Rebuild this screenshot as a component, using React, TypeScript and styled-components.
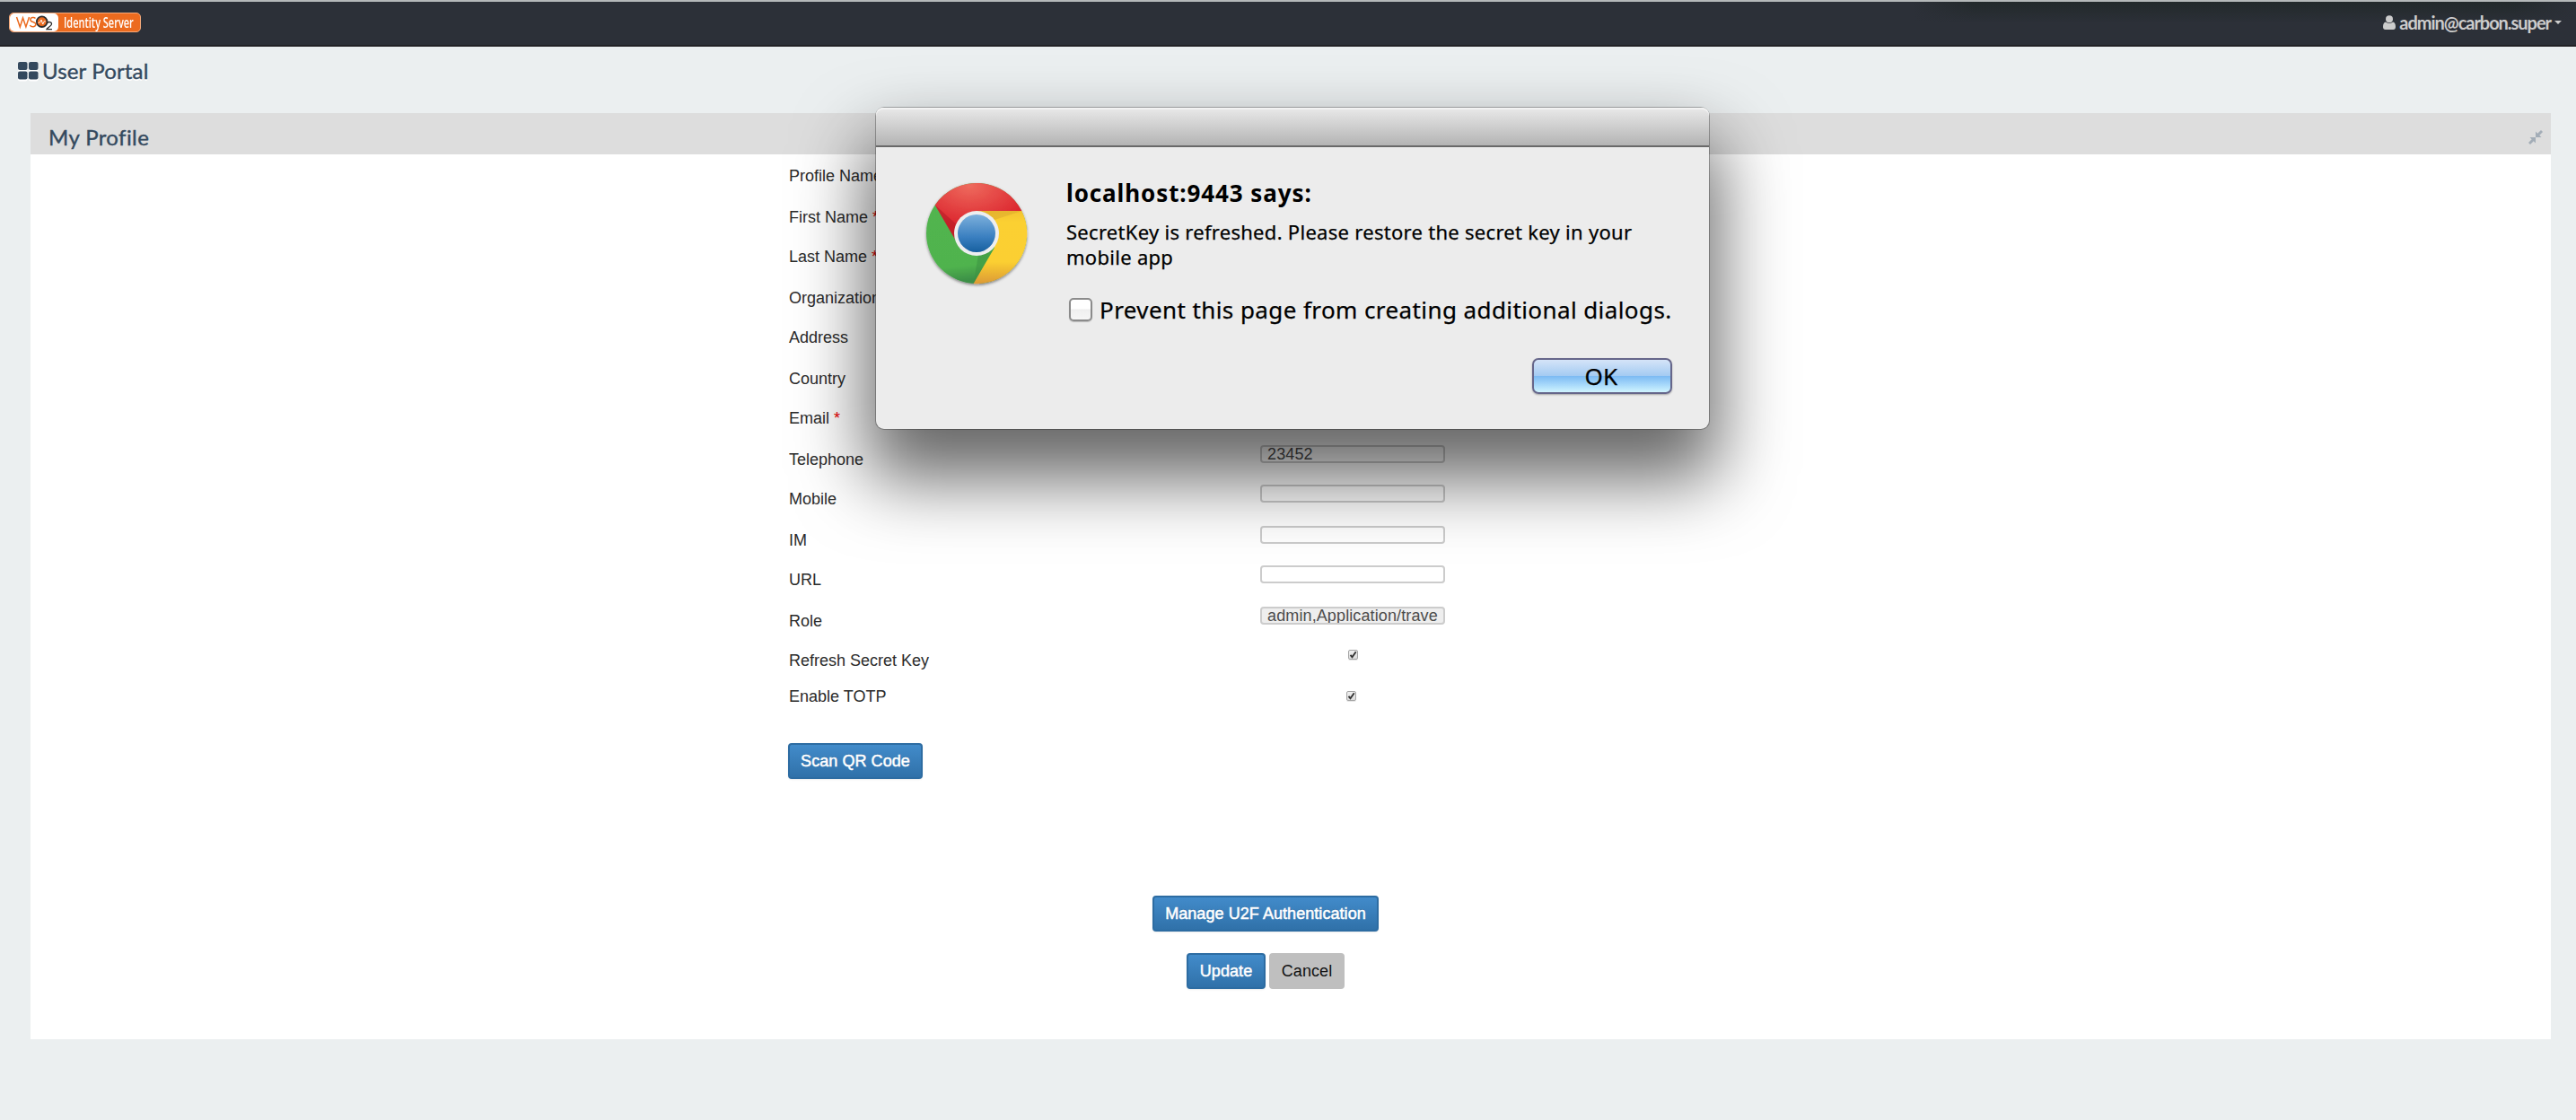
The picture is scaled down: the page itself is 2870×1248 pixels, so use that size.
import React from "react";
import styled, { createGlobalStyle, css } from "styled-components";

const Global = createGlobalStyle`
  * { box-sizing: border-box; }
  body { margin: 0; background: #ebeff0; font: 18px/26px "Liberation Sans", Arial, sans-serif; color: #333; }
`;

const Page = styled.div`
  position: relative;
  display: flex;
  flex-direction: column;
  height: 1248px;
  overflow: hidden;
`;

const TopBar = styled.header`
  display: flex;
  justify-content: space-between;
  height: 52px;
  padding: 12px 16px 0 10px;
  border-top: 2px solid #b4b8b9;
  border-bottom: 2px solid #222226;
  background:
    linear-gradient(to right, #2c3038, rgba(44, 48, 56, 0) 70px, rgba(44, 48, 56, 0) 670px, #2c3038) right top / 740px 24px no-repeat,
    linear-gradient(to bottom, #22292b, #2c3038 24px) right top / 740px 24px no-repeat,
    #2c3038;
`;

const Logo = styled.div`
  display: flex;
  align-items: center;
  width: 147px;
  height: 22px;
  border: 1px solid #f4a97a;
  border-radius: 5px;
  background: #ec6b1f;
`;

const LogoMark = styled.span`
  display: flex;
  width: 54px;
  height: 20px;
  border-radius: 5px;
  background: #fff;
`;

const LogoName = styled.span`
  margin-left: 6px;
  color: #fff;
  font: 600 15px/20px "Open Sans", sans-serif;
  white-space: nowrap;
  transform: scale(0.73, 1.05);
  transform-origin: left center;
`;

const UserMenu = styled.div`
  display: flex;
  align-items: center;
  height: 22px;
  color: #ccc;
  font: bold 20px/22px Lato, sans-serif;
  letter-spacing: -1.03px;
  svg { margin-right: 4px; }
`;

const Caret = styled.i`
  margin-left: 4px;
  border: 4px solid transparent;
  border-top-color: #ccc;
  border-bottom: 0;
`;

const PortalTitle = styled.h1`
  display: flex;
  align-items: center;
  height: 74px;
  margin: 0;
  padding: 0 0 20px 20px;
  color: #34495e;
  font: 24px/30px Lato, sans-serif;
  letter-spacing: 0.15px;
  -webkit-text-stroke: 0.4px #34495e;
  text-shadow: 0 2px 0 #fff;
  svg { margin-right: 4px; filter: drop-shadow(0 2px 0 #fff); }
`;

const Panel = styled.section`
  width: 2808px;
  height: 1032px;
  margin-left: 34px;
  background: #fff;
`;

const PanelHeader = styled.div`
  display: flex;
  align-items: center;
  justify-content: space-between;
  height: 46px;
  padding: 8px 9px 0 20px;
  background: #ddd;
`;

const PanelTitle = styled.h2`
  margin: 0;
  color: #34495e;
  font: 24px/30px Lato, sans-serif;
  letter-spacing: 0.4px;
  -webkit-text-stroke: 0.4px #34495e;
`;

const Form = styled.form`
  width: 1052px;
  margin-left: 844px;
  padding-top: 8px;
`;

const Row = styled.div<{ $height: number }>`
  display: grid;
  grid-template-columns: 526px 206px;
  align-items: start;
  height: ${(p) => p.$height}px;
`;

const Label = styled.label`
  padding: 3px 0 0 1px;
  color: #2b2b2b;
  white-space: nowrap;
`;

const Required = styled.span`
  margin-left: 5px;
  color: #e00;
`;

const TextInput = styled.input`
  width: 206px;
  height: 20px;
  padding: 0 6px;
  border: 2px solid #ccc;
  border-radius: 4px;
  outline: 0;
  background: #fff;
  color: #4c4c4c;
  font: 18px/16px "Liberation Sans", Arial, sans-serif;
  letter-spacing: 0.12px;
  &:disabled { background: #eee; }
`;

const Tick = styled.span<{ $left: number; $top: number }>`
  display: flex;
  width: 11px;
  height: 11px;
  margin: ${(p) => p.$top}px 0 0 ${(p) => p.$left}px;
  border: 1px solid #a5a5a5;
  border-radius: 2px;
  background: linear-gradient(#f0f0f0, #dcdcdc);
  box-shadow: 0 1px 0 #e6e6e6;
`;

const Button = styled.button<{ $width: number; $plain?: boolean }>`
  width: ${(p) => p.$width}px;
  height: 40px;
  padding: 0;
  border: 2px solid #2d6ca2;
  border-radius: 4px;
  background: linear-gradient(#428bca, #3071a9);
  box-shadow: 0 1px 2px rgba(0, 0, 0, 0.08);
  color: #fff;
  font: 18px/24px "Liberation Sans", Arial, sans-serif;
  letter-spacing: 0.06px;
  -webkit-text-stroke: 0.5px currentColor;
  text-shadow: 0 -1px 0 rgba(0, 0, 0, 0.15);
  ${(p) =>
    p.$plain &&
    css`
      border-color: #bfbfbf;
      background: #bfbfbf;
      box-shadow: none;
      color: #111;
      -webkit-text-stroke: 0;
      text-shadow: none;
    `}
`;

const ScanArea = styled.div`
  padding-top: 28px;
`;

const Actions = styled.div`
  display: flex;
  flex-direction: column;
  align-items: center;
  gap: 24px;
  width: 1064px;
  padding-top: 130px;
`;

const ButtonPair = styled.div`
  display: flex;
  gap: 4px;
`;

const Dialog = styled.div`
  position: absolute;
  left: 976px;
  top: 120px;
  width: 928px;
  height: 358px;
  border-radius: 9px;
  background: #ececec;
  box-shadow: 0 0 0 1px rgba(0, 0, 0, 0.28), 0 46px 80px 10px rgba(0, 0, 0, 0.6);
`;

const DialogBar = styled.div`
  height: 44px;
  border-bottom: 2px solid #696969;
  border-radius: 8px 8px 0 0;
  background: linear-gradient(#e9e9e9, #b4b4b4);
  box-shadow: inset 0 2px 0 #f3f3f3;
`;

const DialogBody = styled.div`
  display: grid;
  grid-template-columns: 160px 1fr;
  padding: 35px 41px 0 52px;
`;

const DialogTitle = styled.h3`
  margin: 0;
  color: #000;
  font: bold 26px/32px "Noto Sans", sans-serif;
  letter-spacing: 0.9px;
  white-space: nowrap;
`;

const Message = styled.p`
  margin: 13px 0 0;
  color: #000;
  font: 22px/28px "Noto Sans", sans-serif;
  letter-spacing: 0.29px;
  white-space: nowrap;
  -webkit-text-stroke: 0.25px #000;
`;

const Prevent = styled.div`
  display: flex;
  align-items: center;
  height: 36px;
  margin: 27px 0 0 3px;
  color: #000;
  font: 26px/36px "Noto Sans", sans-serif;
  letter-spacing: 0.41px;
  white-space: nowrap;
  -webkit-text-stroke: 0.25px #000;
`;

const MacCheck = styled.span`
  width: 26px;
  height: 26px;
  margin-right: 8px;
  border: 2px solid #8b8b8b;
  border-radius: 5px;
  background: linear-gradient(#fff 45%, #efefef 50%, #f6f6f6);
  box-shadow: 0 1px 1px rgba(0, 0, 0, 0.2);
`;

const OkButton = styled.button`
  display: block;
  width: 156px;
  height: 40px;
  margin: 36px 0 0 auto;
  padding: 0 2px 0 0;
  border: 2px solid #66668a;
  border-radius: 7px;
  background: linear-gradient(#d5e4f8 0%, #a4cbf2 49%, #7dbbf3 51%, #a9dafb 78%, #d0f4fe 100%);
  box-shadow: 0 1px 2px rgba(0, 0, 0, 0.3);
  color: #000;
  font: 26px/34px "Noto Sans", sans-serif;
  letter-spacing: 0.3px;
  -webkit-text-stroke: 0.25px #000;
`;

const GridIcon = () => (
  <svg width="23" height="20" viewBox="0 0 23 20" fill="#34495e">
    <rect x="0" y="0" width="10.5" height="9" rx="2" />
    <rect x="12" y="0" width="10.5" height="9" rx="2" />
    <rect x="0" y="10.5" width="10.5" height="9" rx="2" />
    <rect x="12" y="10.5" width="10.5" height="9" rx="2" />
  </svg>
);

const UserIcon = () => (
  <svg width="14" height="17" viewBox="0 0 14 17" fill="#ccc">
    <circle cx="7" cy="4.3" r="4" />
    <path d="M3 7.6C1 8 0 10 0 13c0 2 1 3 2.600 3h8.800c1.600 0 2.600-1 2.600-3 0-3-1-5-3-5.400C9.600 9.300 4.400 9.300 3 7.600z" />
  </svg>
);

const CompressIcon = () => (
  <svg width="16" height="16" viewBox="0 0 16 16" fill="#a3adb7">
    <path d="M8 1.500v6.500h6.500L12.300 5.800 16 2 14 0 10.200 3.700z" />
    <path d="M8 14.500V8H1.500l2.200 2.200L0 14l2 2 3.800-3.700z" />
  </svg>
);

const Wso2Mark = () => (
  <svg width="54" height="20" viewBox="0 0 54 20" fill="none">
    <path d="M7.500 4l3.800 11L14.500 5l3.400 10L21.500 4" stroke="#ec6b1f" strokeWidth="1.500" />
    <path d="M28.500 5.500c-1.500-1.800-5.600-1.300-5.600 1.400 0 3.200 6 2 6 5.200 0 3-4.800 3.500-6.600 1" stroke="#ec6b1f" strokeWidth="1.500" />
    <circle cx="35.700" cy="9.200" r="5.800" fill="#ec6b1f" stroke="#2b2b2b" strokeWidth="1.800" />
    <path d="M31.500 10.500l2-.5 1.500-3 1.700 5 1.600-3.300 1.500.3" stroke="#fff" strokeWidth="0.900" />
    <path d="M41.500 11.200c.5-2.500 5.400-2.200 5 .8C46.200 14 42 15.500 41 17.600h6" stroke="#2b2b2b" strokeWidth="1.300" />
  </svg>
);

const CheckMark = () => (
  <svg width="9" height="9" viewBox="0 0 9 9" fill="none">
    <path d="M1.500 4.800l2 2.400L7.700 1.300" stroke="#333" strokeWidth="1.900" />
  </svg>
);

const ChromeLogo = () => (
  <svg width="120" height="124" viewBox="-60 -61 120 124">
    <defs>
      <radialGradient id="red" cx="0.4" cy="0.05" r="0.75">
        <stop offset="0" stopColor="#ee6a5d" />
        <stop offset="1" stopColor="#db222c" />
      </radialGradient>
      <linearGradient id="yellow" x1="0" y1="0" x2="0" y2="1">
        <stop offset="0" stopColor="#f3c22f" />
        <stop offset="0.150" stopColor="#fbd032" />
        <stop offset="0.700" stopColor="#fbcf31" />
        <stop offset="1" stopColor="#dc9a35" />
      </linearGradient>
      <linearGradient id="green" x1="0" y1="0" x2="0.100" y2="1">
        <stop offset="0" stopColor="#52b54f" />
        <stop offset="0.850" stopColor="#50b34e" />
        <stop offset="1" stopColor="#3c8f46" />
      </linearGradient>
      <linearGradient id="blue" x1="0" y1="0" x2="0" y2="1">
        <stop offset="0" stopColor="#7db0dc" />
        <stop offset="0.600" stopColor="#3a7fc0" />
        <stop offset="1" stopColor="#17609f" />
      </linearGradient>
      <filter id="drop" x="-20%" y="-20%" width="140%" height="150%">
        <feDropShadow dx="0" dy="1.500" stdDeviation="1.500" floodOpacity="0.450" />
      </filter>
    </defs>
    <g filter="url(#drop)">
      <circle r="56" fill="url(#green)" />
      <path d="M-46.200-31.500A56 56 0 0 1 50.300-25H0L-24 6z" fill="url(#red)" />
      <path d="M50.300-25A56 56 0 0 1-3.500 56L20 16 0-25z" fill="url(#yellow)" />
    </g>
    <path d="M-46.200-31.500L-24 7-18-6z" fill="#b51c26" opacity="0.600" />
    <path d="M50.300-25L20-15 0-25z" fill="#d9a82c" opacity="0.500" />
    <path d="M-3.500 56L19 17 2 24z" fill="#3a8f41" opacity="0.500" />
    <circle r="25" fill="#eeeeef" />
    <circle r="21" fill="url(#blue)" />
  </svg>
);

type Field = { label: string; required?: boolean; value?: string; locked?: boolean };

const fields: Field[] = [
  { label: "Profile Name" },
  { label: "First Name", required: true },
  { label: "Last Name", required: true },
  { label: "Organization" },
  { label: "Address" },
  { label: "Country" },
  { label: "Email", required: true },
  { label: "Telephone", value: "23452" },
  { label: "Mobile" },
  { label: "IM" },
  { label: "URL" },
  { label: "Role", value: "admin,Application/trave", locked: true },
];

export default function App() {
  return (
    <Page>
      <Global />
      <TopBar>
        <Logo>
          <LogoMark><Wso2Mark /></LogoMark>
          <LogoName>Identity Server</LogoName>
        </Logo>
        <UserMenu>
          <UserIcon />
          admin@carbon.super
          <Caret />
        </UserMenu>
      </TopBar>
      <PortalTitle><GridIcon />User Portal</PortalTitle>
      <Panel>
        <PanelHeader>
          <PanelTitle>My Profile</PanelTitle>
          <CompressIcon />
        </PanelHeader>
        <Form>
          {fields.map((f, i) => (
            <Row key={f.label} $height={i % 2 ? 44 : 46}>
              <Label>
                {f.label}
                {f.required && <Required>*</Required>}
              </Label>
              <TextInput defaultValue={f.value} disabled={f.locked} />
            </Row>
          ))}
          <Row $height={40}>
            <Label>Refresh Secret Key</Label>
            <Tick $left={98} $top={4}><CheckMark /></Tick>
          </Row>
          <Row $height={40}>
            <Label>Enable TOTP</Label>
            <Tick $left={96} $top={10}><CheckMark /></Tick>
          </Row>
          <ScanArea><Button type="button" $width={150}>Scan QR Code</Button></ScanArea>
          <Actions>
            <Button type="button" $width={252}>Manage U2F Authentication</Button>
            <ButtonPair>
              <Button type="button" $width={88}>Update</Button>
              <Button type="button" $width={84} $plain>Cancel</Button>
            </ButtonPair>
          </Actions>
        </Form>
      </Panel>
      <Dialog>
        <DialogBar />
        <DialogBody>
          <ChromeLogo />
          <div>
            <DialogTitle>localhost:9443 says:</DialogTitle>
            <Message>SecretKey is refreshed. Please restore the secret key in your<br />mobile app</Message>
            <Prevent><MacCheck />Prevent this page from creating additional dialogs.</Prevent>
            <OkButton>OK</OkButton>
          </div>
        </DialogBody>
      </Dialog>
    </Page>
  );
}
